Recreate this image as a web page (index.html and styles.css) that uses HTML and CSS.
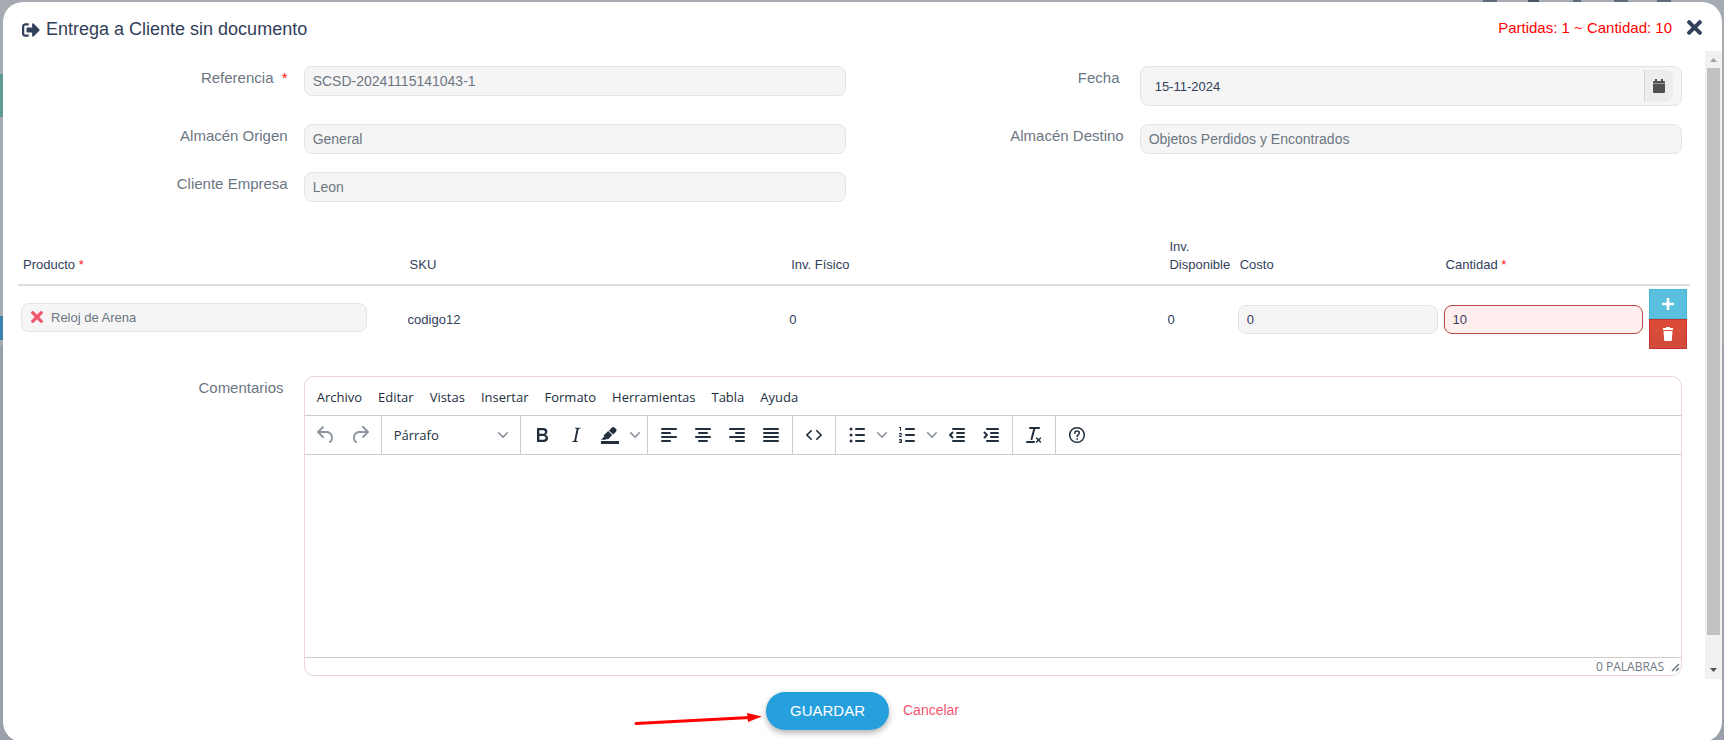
FILE: index.html
```html
<!DOCTYPE html>
<html lang="es">
<head>
<meta charset="utf-8">
<title>Entrega a Cliente sin documento</title>
<link rel="stylesheet" href="styles.css">
</head>
<body>
<svg class="symbols" aria-hidden="true">
  <symbol id="times" viewBox="0 80 352 352"><path d="M242.72 256l100.07-100.07c12.28-12.28 12.28-32.19 0-44.48l-22.24-22.24c-12.28-12.28-32.19-12.28-44.48 0L176 189.28 75.93 89.21c-12.28-12.28-32.19-12.28-44.48 0L9.21 111.45c-12.28 12.28-12.28 32.19 0 44.48L109.28 256 9.21 356.07c-12.28 12.28-12.28 32.19 0 44.48l22.24 22.24c12.28 12.28 32.2 12.28 44.48 0L176 322.72l100.07 100.07c12.28 12.28 32.2 12.28 44.48 0l22.24-22.24c12.28-12.28 12.28-32.19 0-44.48L242.72 256z"/></symbol>
  <symbol id="chevron" viewBox="0 0 10 10"><path d="M8.7 2.2c.3-.3.8-.3 1 0 .4.4.4.9 0 1.2L5.7 7.8c-.3.3-.9.3-1.2 0L.2 3.4a.8.8 0 0 1 0-1.2c.3-.3.8-.3 1.1 0L5 6l3.7-3.8Z"/></symbol>
</svg>

<div class="dialog" role="dialog" aria-labelledby="dialog-title">
  <header class="dialog-header">
    <h1 class="dialog-title" id="dialog-title">
      <svg class="title-icon" viewBox="0 0 512 512" aria-hidden="true"><path d="M497 273L329 441c-15 15-41 4.500-41-17v-96H152c-13.300 0-24-10.700-24-24v-96c0-13.300 10.700-24 24-24h136V88c0-21.400 25.900-32 41-17l168 168c9.300 9.400 9.300 24.600 0 34zM192 436v-40c0-6.600-5.400-12-12-12H96c-17.700 0-32-14.300-32-32V160c0-17.700 14.300-32 32-32h84c6.600 0 12-5.400 12-12V76c0-6.600-5.400-12-12-12H96c-53 0-96 43-96 96v192c0 53 43 96 96 96h84c6.600 0 12-5.400 12-12z"/></svg>
      <span>Entrega a Cliente sin documento</span>
    </h1>
    <span class="summary">Partidas: 1 ~ Cantidad: 10</span>
    <button class="close" type="button" aria-label="Cerrar"><svg viewBox="0 0 16 16"><use href="#times"/></svg></button>
  </header>

  <div class="dialog-body">
    <form class="content" id="delivery">
      <div class="fields">
        <label class="label" for="ref">Referencia &nbsp;<span class="required">*</span></label>
        <div class="cell"><input class="input" id="ref" value="SCSD-20241115141043-1" readonly></div>
        <label class="label" for="date">Fecha&nbsp;</label>
        <div class="cell">
          <div class="date-field">
            <input class="date-input" id="date" value="15-11-2024" readonly>
            <button class="date-button" type="button" aria-label="Abrir calendario">
              <svg viewBox="0 0 12 14"><path d="M2 0h2v2h4V0h2v2h1a1 1 0 0 1 1 1v1H0V3a1 1 0 0 1 1-1h1z"/><path d="M0 4h12v1H0z" opacity=".5"/><path d="M0 5h12v8a1 1 0 0 1-1 1H1a1 1 0 0 1-1-1z"/></svg>
            </button>
          </div>
        </div>

        <label class="label" for="origin">Almacén Origen</label>
        <div class="cell"><input class="input" id="origin" value="General" readonly></div>
        <label class="label" for="target">Almacén Destino</label>
        <div class="cell"><input class="input" id="target" value="Objetos Perdidos y Encontrados" readonly></div>

        <label class="label" for="client">Cliente Empresa</label>
        <div class="cell"><input class="input" id="client" value="Leon" readonly></div>
      </div>

      <table class="items">
        <colgroup>
          <col class="col-product"><col class="col-sku"><col class="col-stock"><col class="col-available"><col class="col-amount"><col class="col-amount"><col class="col-actions">
        </colgroup>
        <thead>
          <tr>
            <th>Producto <span class="required">*</span></th>
            <th>SKU</th>
            <th>Inv. Físico</th>
            <th>Inv. Disponible</th>
            <th>Costo</th>
            <th>Cantidad <span class="required">*</span></th>
            <th></th>
          </tr>
        </thead>
        <tbody>
          <tr>
            <td>
              <div class="product">
                <button class="product-clear" type="button" aria-label="Quitar producto"><svg viewBox="0 0 16 16"><use href="#times"/></svg></button>
                <input class="product-input" value="Reloj de Arena" aria-label="Producto" readonly>
              </div>
            </td>
            <td>codigo12</td>
            <td>0</td>
            <td>0</td>
            <td><input class="input amount" value="0" aria-label="Costo" readonly></td>
            <td><input class="input amount invalid" value="10" aria-label="Cantidad"></td>
            <td>
              <div class="row-actions">
                <button class="row-button add" type="button" aria-label="Agregar"><svg viewBox="0 0 14 14"><path d="M5.700 1h2.600v4.700H13v2.600H8.300V13H5.700V8.300H1V5.700h4.700z"/></svg></button>
                <button class="row-button remove" type="button" aria-label="Eliminar"><svg viewBox="0 0 14 14"><path d="M5 0h4v1h3v2H2V1h3zM2.500 4h9l-.6 9a1 1 0 0 1-1 1H4.100a1 1 0 0 1-1-1z"/></svg></button>
              </div>
            </td>
          </tr>
        </tbody>
      </table>

      <div class="comments">
        <label class="label" for="comments">Comentarios&nbsp;</label>
        <div class="cell">
          <div class="editor">
            <div class="menubar">
              <button type="button">Archivo</button>
              <button type="button">Editar</button>
              <button type="button">Vistas</button>
              <button type="button">Insertar</button>
              <button type="button">Formato</button>
              <button type="button">Herramientas</button>
              <button type="button">Tabla</button>
              <button type="button">Ayuda</button>
            </div>
            <div class="toolbar">
              <div class="group">
                <button class="tool muted" type="button" aria-label="Deshacer"><svg viewBox="0 0 24 24"><path d="M6.400 8H12c3.700 0 6.200 2 6.800 5.100.6 2.700-.4 5.600-2.300 6.800a1 1 0 0 1-1-1.800c1.100-.6 1.800-2.700 1.400-4.600-.5-2.100-2.100-3.500-4.900-3.500H6.400l3.300 3.300a1 1 0 1 1-1.400 1.400l-5-5a1 1 0 0 1 0-1.400l5-5a1 1 0 0 1 1.400 1.400L6.400 8Z"/></svg></button>
                <button class="tool muted" type="button" aria-label="Rehacer"><svg viewBox="0 0 24 24"><path d="M17.600 10H12c-2.800 0-4.400 1.400-4.900 3.500-.4 2 .3 4 1.400 4.600a1 1 0 1 1-1 1.800c-2-1.200-2.900-4.100-2.300-6.800.6-3 3-5.100 6.800-5.100h5.600l-3.300-3.300a1 1 0 1 1 1.400-1.400l5 5a1 1 0 0 1 0 1.400l-5 5a1 1 0 0 1-1.400-1.400l3.300-3.300Z"/></svg></button>
              </div>
              <div class="group">
                <div class="format">
                  <select aria-label="Formato de bloque"><option>Párrafo</option></select>
                  <svg class="chevron" aria-hidden="true"><use href="#chevron"/></svg>
                </div>
              </div>
              <div class="group">
                <button class="tool" type="button" aria-label="Negrita"><svg viewBox="0 0 24 24"><path fill-rule="evenodd" d="M7.800 19c-.3 0-.5 0-.6-.2l-.2-.5V5.700c0-.2 0-.4.2-.5l.6-.2h5c1.500 0 2.700.3 3.500 1 .7.6 1.100 1.400 1.100 2.500a3 3 0 0 1-.6 1.900c-.4.6-1 1-1.600 1.200.4.1.9.3 1.300.6s.8.7 1 1.200c.4.4.5 1 .5 1.600 0 1.300-.4 2.300-1.300 3-.8.7-2.100 1-3.800 1H7.800Zm5-8.300c.6 0 1.200-.1 1.600-.5.4-.3.6-.7.6-1.300 0-1.100-.8-1.700-2.300-1.700H9.300v3.500h3.400Zm.5 6c.7 0 1.300-.1 1.700-.4.4-.4.6-.9.6-1.500s-.2-1-.7-1.400c-.4-.3-1-.4-2-.4H9.400v3.800h4Z"/></svg></button>
                <button class="tool" type="button" aria-label="Cursiva"><svg viewBox="0 0 24 24"><path d="m16.700 4.700-.1.9h-.3c-.6 0-1 0-1.400.3-.3.3-.4.6-.5 1.100l-2.100 9.800v.6c0 .5.4.8 1.400.8h.2l-.2.8H8l.2-.8h.2c1.100 0 1.800-.5 2-1.500l2-9.800.1-.5c0-.6-.4-.8-1.400-.8h-.3l.2-.9h5.800Z"/></svg></button>
                <button class="tool" type="button" aria-label="Color de fondo"><svg viewBox="0 0 24 24"><path d="M3 18h18v3H3z"/><path d="M7.700 16.700H3l3.300-3.300-.7-.8L10.200 8l4 4.100-4 4.200c-.2.200-.6.200-.8 0l-.6-.7-1.100 1.100zm5-7.500L11 7.400l3-2.900a2 2 0 0 1 2.600 0L18 6c.7.7.7 2 0 2.700l-2.900 2.900-1.800-1.800-.5-.6"/></svg></button>
                <button class="tool-arrow" type="button" aria-label="Elegir color"><svg class="chevron"><use href="#chevron"/></svg></button>
              </div>
              <div class="group">
                <button class="tool" type="button" aria-label="Alinear a la izquierda"><svg class="lines" viewBox="0 0 24 24"><path d="M5 6h14M5 10h8M5 14h14M5 18h8"/></svg></button>
                <button class="tool" type="button" aria-label="Centrar"><svg class="lines" viewBox="0 0 24 24"><path d="M5 6h14M8 10h8M5 14h14M8 18h8"/></svg></button>
                <button class="tool" type="button" aria-label="Alinear a la derecha"><svg class="lines" viewBox="0 0 24 24"><path d="M5 6h14M11 10h8M5 14h14M11 18h8"/></svg></button>
                <button class="tool" type="button" aria-label="Justificar"><svg class="lines" viewBox="0 0 24 24"><path d="M5 6h14M5 10h14M5 14h14M5 18h14"/></svg></button>
              </div>
              <div class="group">
                <button class="tool" type="button" aria-label="Código fuente"><svg viewBox="0 0 24 24"><path d="M9.800 15.700c.3.3.3.8 0 1-.3.4-.9.4-1.200 0l-4.400-4.100a.8.8 0 0 1 0-1.200l4.400-4.200c.3-.3.9-.3 1.200 0 .3.3.3.8 0 1.100L6 12l3.800 3.700ZM14.200 15.700c-.3.3-.3.8 0 1 .4.4.9.4 1.200 0l4.400-4.100c.3-.3.3-.9 0-1.200l-4.400-4.200a.8.8 0 0 0-1.200 0c-.3.3-.3.8 0 1.100L18 12l-3.800 3.700Z"/></svg></button>
              </div>
              <div class="group">
                <button class="tool" type="button" aria-label="Lista con viñetas"><svg class="lines" viewBox="0 0 24 24"><path d="M11 6h8M11 12h8M11 18h8"/><path class="solid" d="M4.500 6a1.500 1.500 0 1 0 3 0 1.500 1.500 0 1 0-3 0M4.500 12a1.500 1.500 0 1 0 3 0 1.500 1.500 0 1 0-3 0M4.500 18a1.500 1.500 0 1 0 3 0 1.500 1.500 0 1 0-3 0"/></svg></button>
                <button class="tool-arrow" type="button" aria-label="Tipos de viñeta"><svg class="chevron"><use href="#chevron"/></svg></button>
                <button class="tool" type="button" aria-label="Lista numerada"><svg class="lines" viewBox="0 0 24 24"><path d="M11 6h8M11 12h8M11 18h8"/><path class="solid" d="M6 4v3.500c0 .3-.2.5-.5.5a.5.5 0 0 1-.5-.5V5h-.5a.5.5 0 0 1 0-1H6Zm-1 8.800.2.200h1.300c.3 0 .5.2.5.5s-.2.5-.5.5H4.900a1 1 0 0 1-.9-1V13c0-.4.3-.8.6-1l1.200-.4.2-.3a.2.2 0 0 0-.2-.2H4.500a.5.5 0 0 1-.5-.5c0-.3.2-.5.5-.5h1.600c.5 0 .9.4.9 1v.1c0 .4-.3.8-.6 1l-1.200.4-.2.3ZM7 17v2c0 .6-.4 1-1 1H4.500a.5.5 0 0 1 0-1h1.200c.2 0 .3-.1.3-.3 0-.2-.1-.3-.3-.3H4.400a.4.4 0 1 1 0-.8h1.300c.2 0 .3-.1.3-.3 0-.2-.1-.3-.3-.3H4.500a.5.5 0 1 1 0-1H6c.6 0 1 .4 1 1Z"/></svg></button>
                <button class="tool-arrow" type="button" aria-label="Tipos de numeración"><svg class="chevron"><use href="#chevron"/></svg></button>
                <button class="tool" type="button" aria-label="Reducir sangría"><svg class="lines" viewBox="0 0 24 24"><path d="M8 6h11M12 10h7M12 14h7M8 18h11M7.500 9.500L5 12l2.500 2.500"/></svg></button>
                <button class="tool" type="button" aria-label="Aumentar sangría"><svg class="lines" viewBox="0 0 24 24"><path d="M8 6h11M12 10h7M12 14h7M8 18h11M5.500 9.500L8 12l-2.500 2.500"/></svg></button>
              </div>
              <div class="group">
                <button class="tool" type="button" aria-label="Borrar formato"><svg viewBox="0 0 24 24"><path d="M13.200 6a1 1 0 0 1 0 .2l-2.600 10a1 1 0 0 1-1 .8h-.2a.8.8 0 0 1-.8-1l2.600-10H8a1 1 0 1 1 0-2h9a1 1 0 0 1 0 2h-3.800ZM5 18h7a1 1 0 0 1 0 2H5a1 1 0 0 1 0-2Zm13 1.500L16.500 18 15 19.500a.7.7 0 0 1-1-1l1.500-1.500-1.500-1.500a.7.7 0 0 1 1-1l1.500 1.500 1.500-1.500a.7.7 0 0 1 1 1L17.500 17l1.500 1.500a.7.7 0 0 1-1 1Z"/></svg></button>
              </div>
              <div class="group">
                <button class="tool" type="button" aria-label="Ayuda"><svg class="outline" viewBox="0 0 24 24"><circle cx="12" cy="12" r="7.300"/><path d="M9.800 10.200c0-1.300 1-2.100 2.300-2.100s2.200.8 2.200 1.900c0 1.600-2.200 1.500-2.200 3.400"/><path d="M12.100 15.800v.4"/></svg></button>
              </div>
            </div>
            <textarea class="editor-area" id="comments"></textarea>
            <div class="statusbar">
              <span>0 PALABRAS</span>
              <svg class="resize" viewBox="0 0 10 10" aria-hidden="true"><path d="M1 9l7-7M5 9l3-3"/></svg>
            </div>
          </div>
        </div>
      </div>
    </form>

    <div class="scrollbar" aria-hidden="true">
      <svg class="scroll-end up" viewBox="0 0 17 17"><path d="M5 11l3.500-4 3.500 4z"/></svg>
      <div class="scroll-track"><div class="scroll-thumb"></div></div>
      <svg class="scroll-end down" viewBox="0 0 17 17"><path d="M5 6h7l-3.500 4z"/></svg>
    </div>
  </div>

  <footer class="dialog-footer">
    <div class="actions">
      <svg class="pointer" viewBox="0 0 132 14" aria-hidden="true"><path class="pointer-line" d="M2 11.500L116 5.500"/><path d="M113 1l15 3.500L114 10z"/></svg>
      <button class="save" type="submit" form="delivery">GUARDAR</button>
      <a class="cancel" href="#">Cancelar</a>
    </div>
  </footer>
</div>
</body>
</html>
```

FILE: styles.css
```css
* { box-sizing: border-box; }

body {
  margin: 0;
  height: 100vh;
  overflow: hidden;
  padding: 2px 2px 0 3px;
  font-family: "Liberation Sans", Arial, sans-serif;
  font-size: 14px;
  color: #32405a;
  background:
    linear-gradient(#5f9a94, #5f9a94) 0 74px / 3px 43px no-repeat,
    linear-gradient(#3d82ad, #3d82ad) 0 316px / 3px 24px no-repeat,
    linear-gradient(#5f6b7a, #5f6b7a) 1483px 0 / 14px 2px no-repeat,
    linear-gradient(#4a5568, #4a5568) 1528px 0 / 11px 2px no-repeat,
    linear-gradient(#5f6b7a, #5f6b7a) 1573px 0 / 8px 2px no-repeat,
    linear-gradient(#5f6b7a, #5f6b7a) 1614px 0 / 14px 2px no-repeat,
    linear-gradient(#5f6b7a, #5f6b7a) 1657px 0 / 14px 2px no-repeat,
    linear-gradient(#a5abb1, #a5abb1) 0 0 / 100% 346px no-repeat,
    #9aa1ac;
}

button, input, select, textarea {
  margin: 0;
  padding: 0;
  border: 0;
  background: none;
  font: inherit;
  color: inherit;
  outline: 0;
}

svg { display: block; fill: currentColor; }
.symbols { position: absolute; width: 0; height: 0; }
.required { color: #ff1a1a; }

.dialog {
  height: 100vh;
  display: flex;
  flex-direction: column;
  background: #fff;
  border-radius: 20px;
  overflow: hidden;
}

.dialog-header {
  flex: none;
  display: flex;
  align-items: center;
  gap: 15px;
  height: 49px;
  padding: 2px 20px 0 19px;
}

.dialog-title {
  flex: 1;
  display: flex;
  align-items: center;
  gap: 6px;
  margin: 0;
  padding-top: 4px;
  font-size: 18px;
  font-weight: 400;
}

.title-icon { width: 18px; height: 18px; }
.summary { font-size: 15px; color: #ff0000; }
.close { width: 15px; height: 15px; }
.close svg { width: 15px; height: 15px; }

.dialog-body { flex: 1; min-height: 0; display: flex; }
.content { flex: 1; min-width: 0; padding: 15px 15px 3px; }

.fields {
  display: grid;
  grid-template-columns: 2fr 4fr 2fr 4fr;
  row-gap: 18px;
}

.label {
  padding-right: 9px;
  font-size: 15px;
  line-height: 24px;
  text-align: right;
  color: #6c7682;
}

.cell { min-width: 0; padding: 0 8px 0 7px; }

.input {
  display: block;
  width: 100%;
  height: 30px;
  padding: 0 8px;
  border: 1px solid #e4e4e4;
  border-radius: 8px;
  background: #f5f5f5;
  color: #6c7682;
}

.date-field {
  display: flex;
  align-items: center;
  height: 40px;
  padding: 0 8px 0 14px;
  border: 1px solid #e4e4e4;
  border-radius: 8px;
  background: #f5f5f5;
}

.date-input { flex: 1; min-width: 0; font-size: 13px; color: #32405a; }

.date-button {
  display: grid;
  place-items: center;
  width: 29px;
  height: 32px;
  border-left: 1px solid #d4d4d4;
  border-radius: 0 8px 8px 0;
  background: #ededed;
  color: #515151;
}
.date-button svg { width: 12px; height: 14px; }

.items {
  width: 100%;
  margin: 24px 0;
  table-layout: fixed;
  border-collapse: collapse;
  font-size: 13px;
}
.col-product { width: 23.1%; }
.col-sku { width: 22.8%; }
.col-stock { width: 22.6%; }
.col-available { width: 4.2%; }
.col-amount { width: 12.3%; }
.col-actions { width: 2.6%; }

.items th {
  padding: 12px 0 10px 5px;
  border-bottom: 2px solid #dcdcdc;
  font-weight: 400;
  line-height: 18px;
  text-align: left;
  vertical-align: bottom;
}
.items td { padding: 3px; vertical-align: middle; }

.product {
  display: flex;
  align-items: center;
  gap: 8px;
  width: 91%;
  height: 29px;
  margin-bottom: 4px;
  padding: 0 9px;
  border: 1px solid #e4e4e4;
  border-radius: 8px;
  background: #f5f5f5;
}
.product-clear { color: #f2566f; }
.product-clear svg { width: 12px; height: 12px; }
.product-input { flex: 1; min-width: 0; color: #6c7682; }

.amount { height: 29px; color: #32405a; }
.invalid { border-color: #b94a48; background: #ffeeee; }

.row-actions { display: flex; flex-direction: column; }
.row-button {
  display: grid;
  place-items: center;
  width: 100%;
  height: 30px;
  border: 1px solid;
  color: #fff;
}
.row-button svg { width: 14px; height: 14px; }
.add { background: #5bc0de; border-color: #46b8da; }
.remove { background: linear-gradient(#dd4b39, #d04a3a); border-color: #c9302c; }

.comments { display: grid; grid-template-columns: 2fr 10fr; }

.editor {
  border: 1px solid #ead6d6;
  border-radius: 10px;
  overflow: hidden;
  font-family: "Open Sans", "Noto Sans", sans-serif;
  color: #222f3e;
}

.menubar {
  display: flex;
  align-items: center;
  gap: 16px;
  height: 38px;
  padding: 2px 12px 0;
  font-size: 13px;
}

.toolbar {
  display: flex;
  height: 40px;
  border-top: 1px solid #cccccc;
  border-bottom: 1px solid #cccccc;
}
.group { display: flex; align-items: center; padding: 0 4px; }
.group:not(:last-child) { border-right: 1px solid #cccccc; }

.tool { display: grid; place-items: center; width: 34px; height: 34px; }
.tool svg { width: 24px; height: 24px; }
.tool-arrow { display: grid; place-items: center; width: 16px; height: 34px; color: #8f969f; }
.muted { color: #8f969f; }
.chevron { width: 10px; height: 10px; }

.lines { fill: none; stroke: currentColor; stroke-width: 2; stroke-linecap: round; stroke-linejoin: round; }
.lines .solid { fill: currentColor; stroke: none; }
.outline { fill: none; stroke: currentColor; stroke-width: 1.5; stroke-linecap: round; }

.format { display: flex; align-items: center; width: 130px; padding: 0 8px; }
.format select { flex: 1; min-width: 0; appearance: none; font-size: 13px; }
.format .chevron { color: #8f969f; }

.editor-area { display: block; width: 100%; height: 202px; padding: 12px; resize: none; }

.statusbar {
  display: flex;
  align-items: center;
  justify-content: flex-end;
  gap: 7px;
  height: 18px;
  border-top: 1px solid #cccccc;
  font-size: 12px;
  color: #6f7883;
}
.resize { width: 10px; height: 10px; fill: none; stroke: currentColor; stroke-width: 1.5; }

.scrollbar { flex: none; display: flex; flex-direction: column; width: 17px; background: #f1f1f1; }
.scroll-end { width: 17px; height: 17px; }
.up { color: #a3a3a3; }
.down { color: #505050; }
.scroll-track { flex: 1; padding: 0 2px; }
.scroll-thumb { height: 95.5%; background: #c1c1c1; }

.dialog-footer { flex: none; display: flex; justify-content: center; height: 63px; padding-top: 13px; }
.actions { position: relative; display: flex; align-items: center; gap: 14px; height: 38px; }

.save {
  height: 38px;
  padding: 0 24px 2px;
  border-radius: 19px;
  background: #25a0dc;
  color: #fff;
  font-size: 15px;
  box-shadow: 0 3px 6px rgba(0, 0, 0, 0.3);
}
.cancel { padding-bottom: 2px; color: #f2566f; text-decoration: none; }

.pointer { position: absolute; right: 100%; top: 20px; width: 132px; height: 14px; color: #ff0000; }
.pointer-line { stroke: currentColor; stroke-width: 3; stroke-linecap: round; }
```
